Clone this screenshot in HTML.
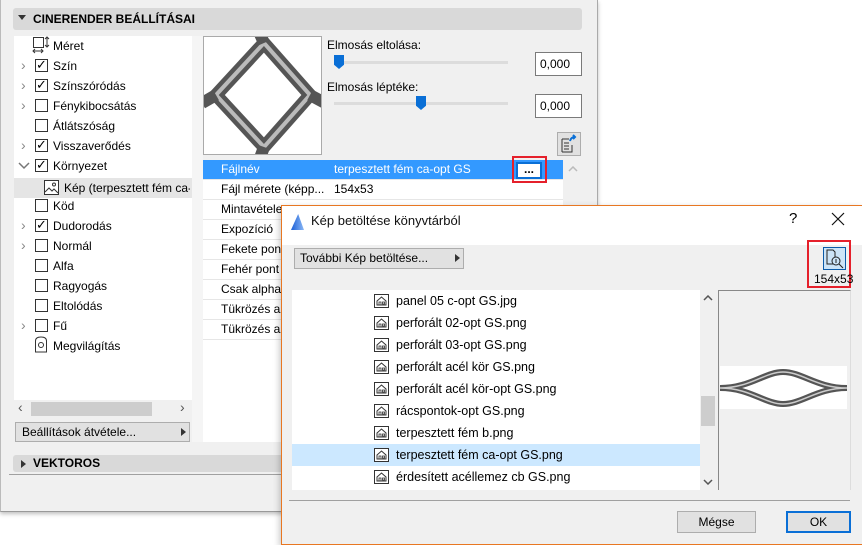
<!DOCTYPE html>
<html><head><meta charset="utf-8"><style>
*{box-sizing:border-box;margin:0;padding:0}
body{width:862px;height:545px;position:relative;overflow:hidden;background:#fff;font-family:"Liberation Sans","DejaVu Sans",sans-serif;font-size:12px;color:#000}
.a{position:absolute}
.cb{position:absolute;width:13px;height:13px;border:1px solid #333;background:#fff;font-size:13px;line-height:11px;text-align:center;font-weight:bold;font-family:"DejaVu Sans",sans-serif}
.chev{position:absolute;color:#888;font-size:14px;line-height:14px}
.row{position:absolute;left:0;width:378px;height:20px;border-bottom:1px solid #e6e6e6;line-height:19px;padding-left:18px;white-space:nowrap;overflow:hidden}
.li{position:absolute;left:0;width:408px;height:22px;line-height:22px;padding-left:104px;font-size:12.5px;white-space:nowrap}
.ico{position:absolute;left:82px;top:4px;width:15px;height:14px}
</style></head><body>
<svg width="0" height="0" style="position:absolute"><defs><symbol id="h" viewBox="0 0 15 14"><rect x="0.5" y="0.5" width="14" height="13" fill="#fff" stroke="#333"/><path d="M3 7 L7.5 3 L12 7 V11 H3 Z" fill="none" stroke="#333"/><rect x="5" y="8" width="2" height="3" fill="none" stroke="#333" stroke-width=".8"/><rect x="8.5" y="8" width="2" height="2" fill="none" stroke="#333" stroke-width=".8"/></symbol></defs></svg>
<!-- main window -->
<div class="a" style="left:0;top:0;width:598px;height:512px;background:#f0f0f0;border-right:1px solid #aaa;border-left:1px solid #bbb;border-bottom:1px solid #999;box-shadow:0 2px 4px rgba(0,0,0,.25)"></div>
<div class="a" style="left:13px;top:8px;width:569px;height:22px;background:#d9d9d9;border-radius:3px;font-weight:bold;font-size:12px;line-height:22px;padding-left:20px">CINERENDER BEÁLLÍTÁSAI</div>
<div class="a" style="left:18px;top:15px;border-left:4px solid transparent;border-right:4px solid transparent;border-top:5px solid #333"></div>
<!-- tree -->
<div class="a" style="left:14px;top:36px;width:178px;height:364px;background:#fff"></div>
<div class="a" style="left:192px;top:36px;width:11px;height:406px;background:#f5f5f5"></div>
<svg class="a" style="left:32px;top:36px" width="18" height="18"><rect x="1.5" y="1.5" width="10" height="10" fill="none" stroke="#333"/><path d="M15 1 V11 M13 3 L15 1 L17 3 M13 9 L15 11 L17 9 M1 15 H11 M3 13 L1 15 L3 17 M9 13 L11 15 L9 17" fill="none" stroke="#333"/></svg>
<div class="a" style="left:53px;top:39px">Méret</div>
<div class="a" style="left:14px;top:178px;width:178px;height:20px;background:#e5e5e5"></div>
<svg class="a" style="left:44px;top:180px" width="15" height="15"><rect x="0.5" y="0.5" width="14" height="14" fill="#fff" stroke="#333"/><path d="M1 12 L5 8 L8 11 L10 9 L14 13" fill="none" stroke="#333"/><circle cx="10" cy="4.5" r="1.5" fill="none" stroke="#333"/></svg>
<div class="a" style="left:64px;top:181px;white-space:nowrap;width:126px;overflow:hidden">Kép (terpesztett fém ca-opt</div>
<div class="chev" style="left:21px;top:58px">›</div><div class="cb" style="left:35px;top:59px">✓</div><div class="a" style="left:53px;top:59px">Szín</div>
<div class="chev" style="left:21px;top:78px">›</div><div class="cb" style="left:35px;top:79px">✓</div><div class="a" style="left:53px;top:79px">Színszóródás</div>
<div class="chev" style="left:21px;top:98px">›</div><div class="cb" style="left:35px;top:99px"></div><div class="a" style="left:53px;top:99px">Fénykibocsátás</div>
<div class="cb" style="left:35px;top:119px"></div><div class="a" style="left:53px;top:119px">Átlátszóság</div>
<div class="chev" style="left:21px;top:138px">›</div><div class="cb" style="left:35px;top:139px">✓</div><div class="a" style="left:53px;top:139px">Visszaverődés</div>
<svg class="a" style="left:18px;top:162px" width="12" height="8"><path d="M1 1 L6 6 L11 1" fill="none" stroke="#777" stroke-width="1.5"/></svg><div class="cb" style="left:35px;top:159px">✓</div><div class="a" style="left:53px;top:159px">Környezet</div>
<div class="cb" style="left:35px;top:199px"></div><div class="a" style="left:53px;top:199px">Köd</div>
<div class="chev" style="left:21px;top:218px">›</div><div class="cb" style="left:35px;top:219px">✓</div><div class="a" style="left:53px;top:219px">Dudorodás</div>
<div class="chev" style="left:21px;top:238px">›</div><div class="cb" style="left:35px;top:239px"></div><div class="a" style="left:53px;top:239px">Normál</div>
<div class="cb" style="left:35px;top:259px"></div><div class="a" style="left:53px;top:259px">Alfa</div>
<div class="cb" style="left:35px;top:279px"></div><div class="a" style="left:53px;top:279px">Ragyogás</div>
<div class="cb" style="left:35px;top:299px"></div><div class="a" style="left:53px;top:299px">Eltolódás</div>
<div class="chev" style="left:21px;top:318px">›</div><div class="cb" style="left:35px;top:319px"></div><div class="a" style="left:53px;top:319px">Fű</div>
<svg class="a" style="left:34px;top:336px" width="14" height="17"><path d="M1.5 16 V5 Q1.5 1 7 1 Q12.5 1 12.5 5 V16 Z" fill="none" stroke="#333"/><circle cx="7" cy="9" r="2.5" fill="none" stroke="#333"/></svg><div class="a" style="left:53px;top:339px">Megvilágítás</div>
<div class="a" style="left:14px;top:402px;width:178px;height:14px;background:#f0f0f0"></div>
<div class="a" style="left:31px;top:402px;width:121px;height:14px;background:#cdcdcd"></div>
<div class="a" style="left:18px;top:399px;color:#555;font-size:14px">‹</div><div class="a" style="left:180px;top:399px;color:#555;font-size:14px">›</div>
<div class="a" style="left:15px;top:422px;width:175px;height:20px;border:1px solid #adadad;background:#e1e1e1;line-height:18px;padding-left:6px">Beállítások átvétele...</div>
<div class="a" style="left:181px;top:428px;border-top:4px solid transparent;border-bottom:4px solid transparent;border-left:5px solid #333"></div>
<!-- preview -->
<div class="a" style="left:203px;top:36px;width:119px;height:119px;background:#fff;border:1px solid #aaa;overflow:hidden">
<svg width="119" height="119"><path d="M60 6 L106 58 L60 110 L12 58 Z" fill="none" stroke="#555" stroke-width="13" stroke-linejoin="round"/><path d="M60 6 L106 58 L60 110 L12 58 Z" fill="none" stroke="#bbb" stroke-width="4" stroke-linejoin="round"/><path d="M-2 66 L12 58 M106 58 L121 66 M60 110 L56 121 M60 6 L56 -3" stroke="#555" stroke-width="12"/></svg></div>
<div class="a" style="left:327px;top:38px">Elmosás eltolása:</div>
<div class="a" style="left:334px;top:61px;width:174px;height:3px;background:#dcdcdc"></div>
<div class="a" style="left:334px;top:55px;width:10px;height:14px;background:#0a6fd6;clip-path:polygon(0 0,100% 0,100% 70%,50% 100%,0 70%)"></div>
<div class="a" style="left:535px;top:52px;width:47px;height:24px;border:1px solid #7a7a7a;background:#fff;line-height:22px;padding-left:4px">0,000</div>
<div class="a" style="left:327px;top:80px">Elmosás léptéke:</div>
<div class="a" style="left:334px;top:102px;width:174px;height:3px;background:#dcdcdc"></div>
<div class="a" style="left:416px;top:96px;width:10px;height:14px;background:#0a6fd6;clip-path:polygon(0 0,100% 0,100% 70%,50% 100%,0 70%)"></div>
<div class="a" style="left:535px;top:94px;width:47px;height:24px;border:1px solid #7a7a7a;background:#fff;line-height:22px;padding-left:4px">0,000</div>
<div class="a" style="left:557px;top:132px;width:24px;height:24px;border:1px solid #adadad;background:#e1e1e1"><svg width="22" height="22"><path d="M4 6 H11 M4 19 V6 M4 19 H14 V12" fill="none" stroke="#333"/><path d="M6 10 H11 M6 13 H11 M6 16 H11" stroke="#333"/><path d="M12 8 Q13 4 17 4 M15 2 L17 4 L15 6" fill="none" stroke="#0a6fd6" stroke-width="2"/></svg></div>
<!-- properties -->
<div class="a" style="left:203px;top:160px;width:378px;height:282px;background:#fff">
<div class="row" style="top:0;background:#3399ff;color:#fff">Fájlnév<span class="a" style="left:131px">terpesztett fém ca-opt GS</span></div>
<div class="row" style="top:20px">Fájl mérete (képp...<span class="a" style="left:131px">154x53</span></div>
<div class="row" style="top:40px">Mintavétele</div>
<div class="row" style="top:60px">Expozíció</div>
<div class="row" style="top:80px">Fekete pon</div>
<div class="row" style="top:100px">Fehér pont</div>
<div class="row" style="top:120px">Csak alpha</div>
<div class="row" style="top:140px">Tükrözés az</div>
<div class="row" style="top:160px">Tükrözés az</div>
</div>
<div class="a" style="left:563px;top:160px;width:18px;height:282px;background:#f0f0f0"></div>
<svg class="a" style="left:568px;top:166px" width="10" height="6"><path d="M1 5 L5 1 L9 5" fill="none" stroke="#bbb" stroke-width="1.5"/></svg>
<div class="a" style="left:516px;top:162px;width:26px;height:17px;background:#fff;border:2px solid #0a6fd6;text-align:center;line-height:10px;font-weight:bold">...</div>
<div class="a" style="left:512px;top:156px;width:35px;height:27px;border:2px solid #e5202b"></div>
<div class="a" style="left:13px;top:455px;width:585px;height:17px;background:#d9d9d9;border-radius:3px;font-weight:bold;line-height:17px;padding-left:20px">VEKTOROS</div>
<div class="a" style="left:21px;top:460px;border-top:4px solid transparent;border-bottom:4px solid transparent;border-left:5px solid #333"></div>
<div class="a" style="left:9px;top:474px;width:590px;height:1px;background:#a0a0a0"></div>
<!-- dialog -->
<div class="a" style="left:281px;top:205px;width:581px;height:340px;background:#f0f0f0;border:1px solid #e87722;border-right:none;box-shadow:-2px 2px 6px rgba(0,0,0,.2)"></div>
<div class="a" style="left:282px;top:206px;width:580px;height:39px;background:#fff"></div>
<div class="a" style="left:291px;top:214px;width:13px;height:16px;background:linear-gradient(90deg,#1c5fd6,#8bb8f5);clip-path:polygon(0 100%,55% 0,100% 100%)"></div>
<div class="a" style="left:311px;top:213px;font-size:13px;color:#111">Kép betöltése könyvtárból</div>
<div class="a" style="left:789px;top:210px;font-size:15px">?</div>
<svg class="a" style="left:831px;top:212px" width="14" height="14"><path d="M1 1 L13 13 M13 1 L1 13" stroke="#111" stroke-width="1.2"/></svg>
<div class="a" style="left:294px;top:248px;width:170px;height:21px;border:1px solid #adadad;background:#e1e1e1;line-height:19px;padding-left:5px">További Kép betöltése...</div>
<div class="a" style="left:455px;top:254px;border-top:4px solid transparent;border-bottom:4px solid transparent;border-left:5px solid #333"></div>
<div class="a" style="left:807px;top:240px;width:44px;height:48px;border:2px solid #e5202b"></div>
<div class="a" style="left:823px;top:247px;width:23px;height:23px;background:#cce4f7;border:1px solid #0a5aa8"><svg width="21" height="21"><path d="M3 2 H9 L11 4 V16 H3 Z" fill="none" stroke="#222"/><circle cx="12" cy="13" r="4" fill="#cce4f7" stroke="#222"/><path d="M12 11 V15 M15 16 L19 20" stroke="#222"/></svg></div>
<div class="a" style="left:814px;top:272px;font-size:12px">154x53</div>
<div class="a" style="left:292px;top:290px;width:408px;height:200px;background:#fff;overflow:hidden">
<div class="li" style="top:0"><svg class="ico"><use href="#h"/></svg>panel 05 c-opt GS.jpg</div>
<div class="li" style="top:22px"><svg class="ico"><use href="#h"/></svg>perforált 02-opt GS.png</div>
<div class="li" style="top:44px"><svg class="ico"><use href="#h"/></svg>perforált 03-opt GS.png</div>
<div class="li" style="top:66px"><svg class="ico"><use href="#h"/></svg>perforált acél kör GS.png</div>
<div class="li" style="top:88px"><svg class="ico"><use href="#h"/></svg>perforált acél kör-opt GS.png</div>
<div class="li" style="top:110px"><svg class="ico"><use href="#h"/></svg>rácspontok-opt GS.png</div>
<div class="li" style="top:132px"><svg class="ico"><use href="#h"/></svg>terpesztett fém b.png</div>
<div class="li" style="top:154px;background:#cce8ff"><svg class="ico"><use href="#h"/></svg>terpesztett fém ca-opt GS.png</div>
<div class="li" style="top:176px"><svg class="ico"><use href="#h"/></svg>érdesített acéllemez cb GS.png</div>
</div>
<div class="a" style="left:700px;top:290px;width:16px;height:200px;background:#f0f0f0"></div>
<div class="a" style="left:701px;top:396px;width:14px;height:30px;background:#cdcdcd"></div>
<svg class="a" style="left:703px;top:295px" width="10" height="6"><path d="M1 5 L5 1 L9 5" fill="none" stroke="#555" stroke-width="1.5"/></svg>
<svg class="a" style="left:703px;top:479px" width="10" height="6"><path d="M1 1 L5 5 L9 1" fill="none" stroke="#555" stroke-width="1.5"/></svg>
<div class="a" style="left:718px;top:290px;width:133px;height:200px;border:1px solid #888;border-right-color:#ddd;border-bottom:none;background:#f0f0f0;overflow:hidden">
<div class="a" style="left:1px;top:75px;width:127px;height:43px;background:#fff"><svg width="127" height="43"><path d="M0 22 C30 22 45 6 63 6 C82 6 97 22 127 22 C97 22 82 38 63 38 C45 38 30 22 0 22Z" fill="none" stroke="#555" stroke-width="6"/><path d="M0 22 C30 22 45 6 63 6 C82 6 97 22 127 22 C97 22 82 38 63 38 C45 38 30 22 0 22Z" fill="none" stroke="#ccc" stroke-width="1.5"/></svg></div></div>
<div class="a" style="left:289px;top:500px;width:561px;height:1px;background:#a0a0a0"></div>
<div class="a" style="left:677px;top:511px;width:79px;height:22px;border:1px solid #adadad;background:#e1e1e1;text-align:center;line-height:20px">Mégse</div>
<div class="a" style="left:786px;top:511px;width:65px;height:22px;border:2px solid #0a6fd6;background:#e1e1e1;text-align:center;line-height:18px">OK</div>
</body></html>
